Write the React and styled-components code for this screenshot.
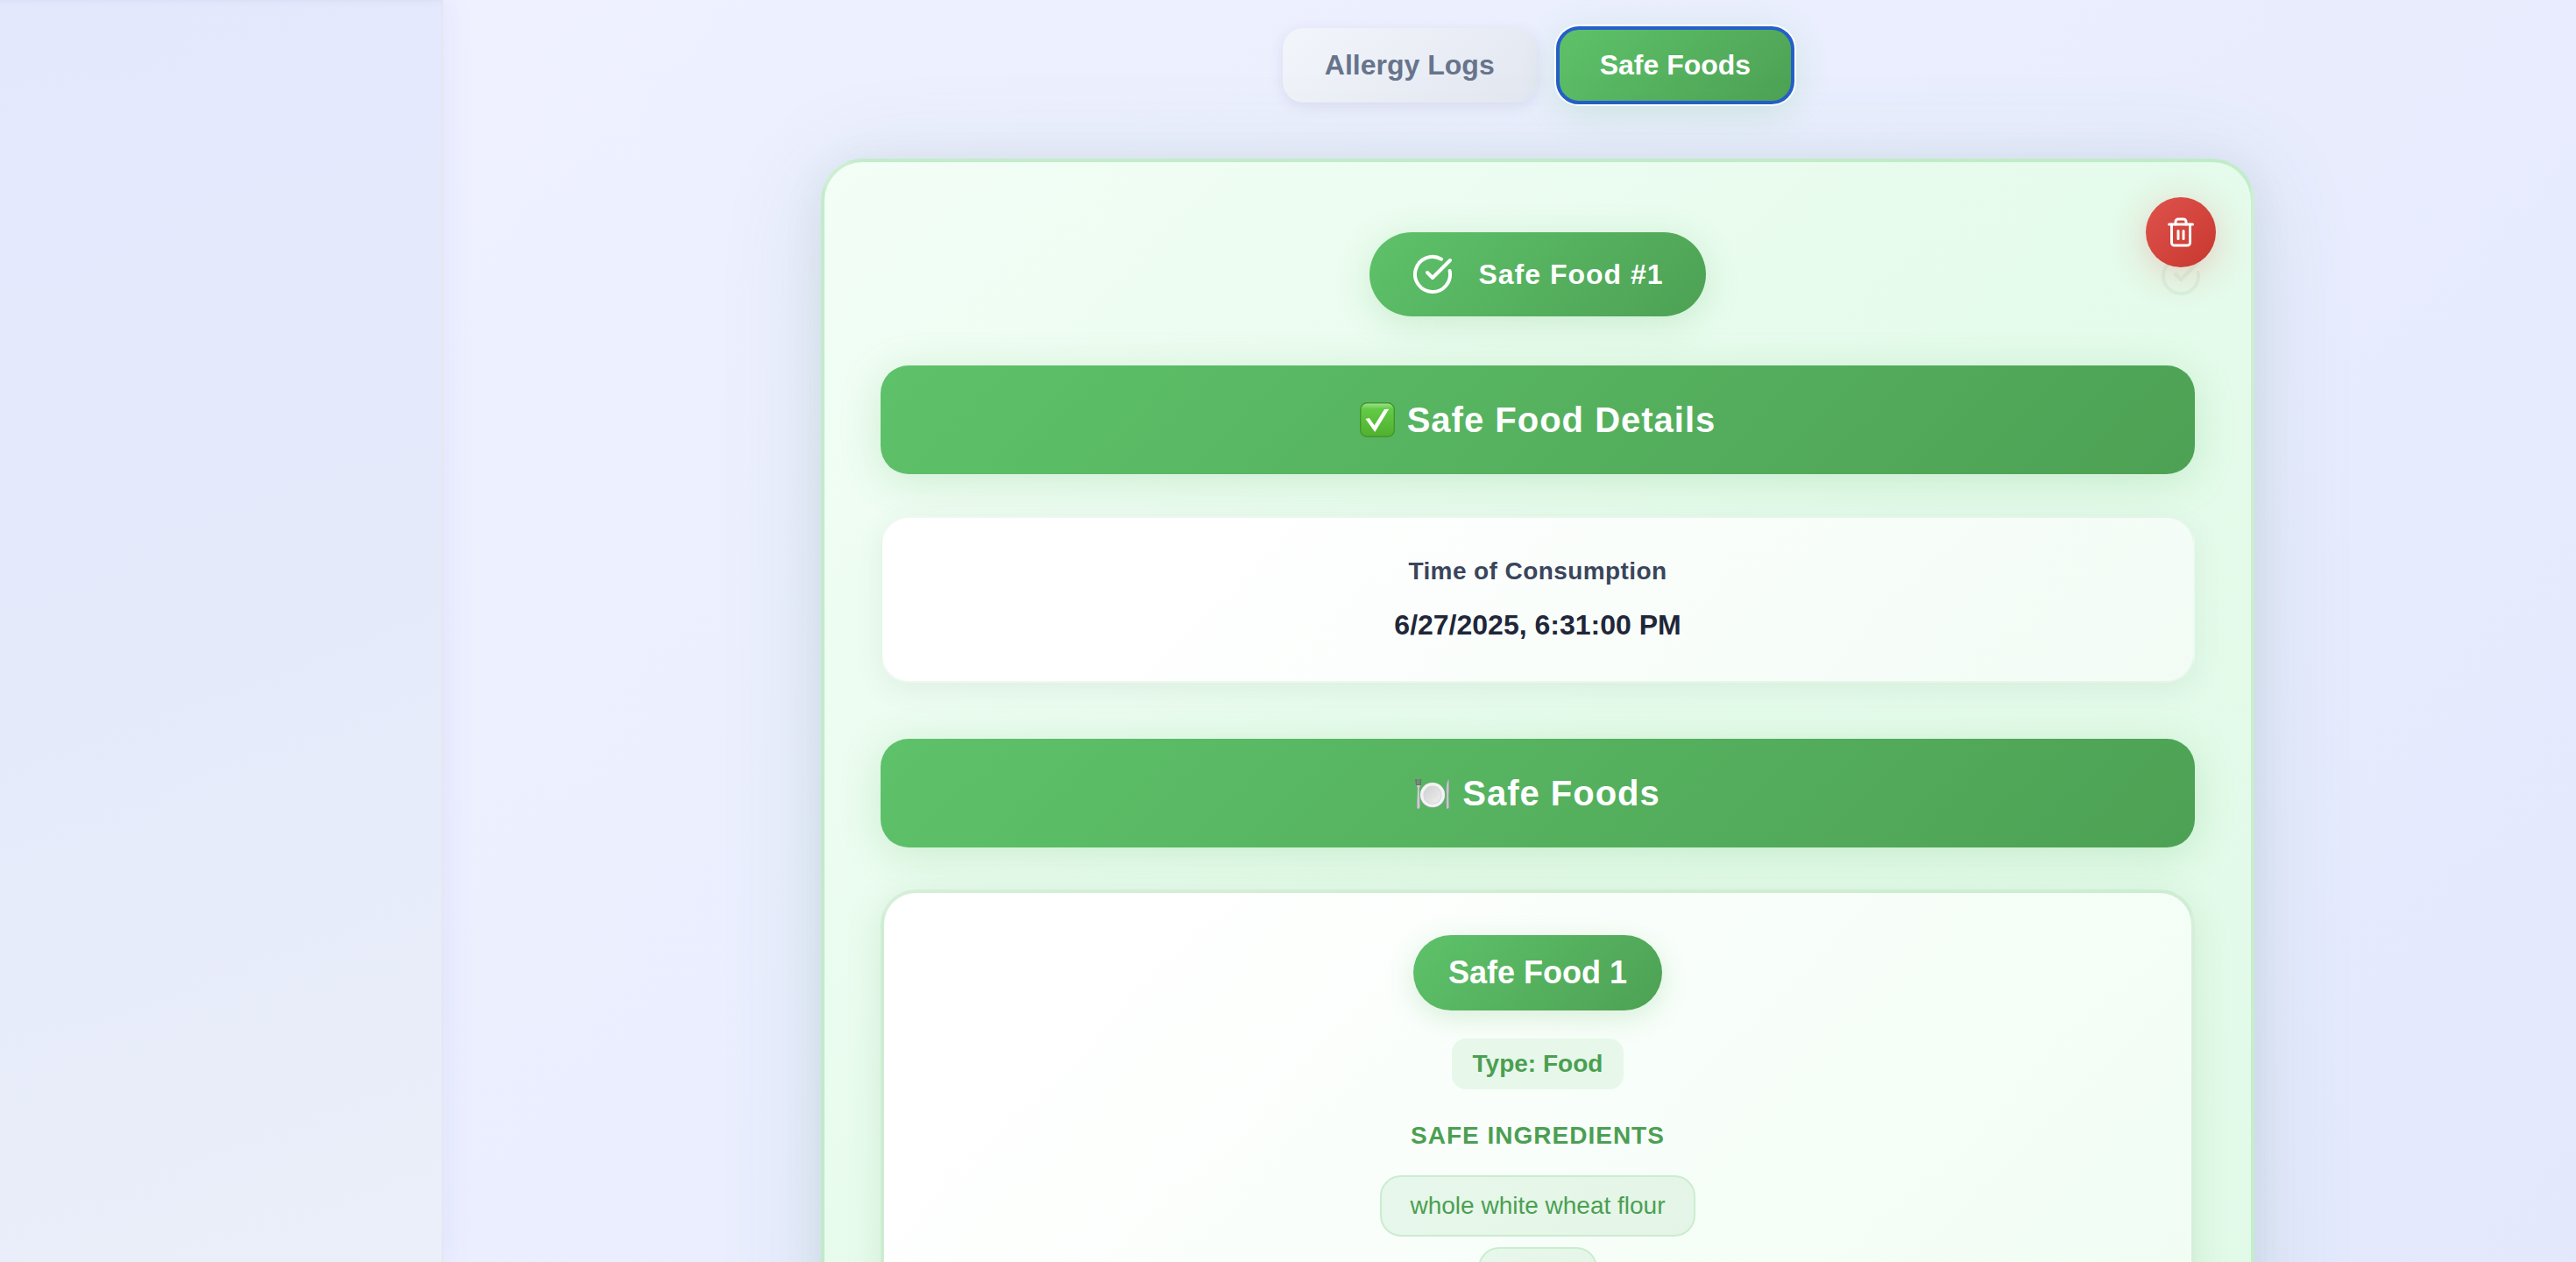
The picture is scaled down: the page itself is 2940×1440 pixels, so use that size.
import React, { useState } from 'react'
import styled, { createGlobalStyle } from 'styled-components'
import { CircleCheckBig, Trash2 } from 'lucide-react'

const GlobalStyle = createGlobalStyle`
    * {
        box-sizing: border-box;
    }

    body {
        margin: 0;
        font-family: "Liberation Sans", Arial, sans-serif;
        font-size: 28px;
        line-height: 1.5;
        color: #1f2739;
    }
`

const green = 'linear-gradient(135deg, #5ec26a 0%, #4da154 100%)'
const greenLine = 'rgba(86, 190, 100, 0.24)'

const Page = styled.div`
    display: flex;
    height: 100vh;
    overflow: hidden;
    background: linear-gradient(135deg, #f0f2ff 0%, #eaeefe 50%, #e3e8fd 100%);
`

const Sidebar = styled.aside`
    flex: 0 0 506px;
    background: linear-gradient(160deg, #e3e8fd 0%, #e5eafb 50%, #ebeff9 100%);
    border-right: 2px solid #e7e6ef;
    box-shadow: 4px 0 32px rgba(99, 102, 241, 0.08), inset 0 8px 8px -8px rgba(80, 80, 140, 0.08);
`

const Main = styled.main`
    flex: 1;
    display: flex;
    flex-direction: column;
    align-items: center;
    gap: 64px;
    padding: 32px 0 64px 64px;
`

const Tabs = styled.div`
    display: flex;
    gap: 24px;
`

const Tab = styled.button`
    border: none;
    border-radius: 24px;
    padding: 24px 48px;
    font: 700 32px/37px "Liberation Sans", Arial, sans-serif;
    cursor: pointer;
    color: ${props => (props.$active ? '#fff' : '#67748b')};
    background: ${props => (props.$active ? green : 'linear-gradient(135deg, #f2f5fa 0%, #e3e7f1 100%)')};
    outline: ${props => (props.$active ? '4px solid #255fc9' : 'none')};
    outline-offset: -2px;
    box-shadow: ${props => (props.$active
        ? '0 0 0 4px #fff, 0 8px 40px rgba(95, 197, 108, 0.24)'
        : '0 4px 16px rgba(60, 60, 110, 0.1)')};
`

const LogCard = styled.section`
    position: relative;
    display: flex;
    flex-direction: column;
    align-items: center;
    width: 100%;
    max-width: 1636px;
    padding: 80px 64px 64px;
    border: 4px solid ${greenLine};
    border-radius: 48px;
    background: linear-gradient(135deg, #f3fef6 0%, #e5fbeb 50%, #e1fae8 100%);
    box-shadow: 0 16px 120px rgba(70, 150, 110, 0.14), 0 8px 48px rgba(40, 70, 60, 0.08);
`

const DeleteButton = styled.button`
    position: absolute;
    z-index: 1;
    top: 40px;
    right: 40px;
    display: flex;
    align-items: center;
    justify-content: center;
    width: 80px;
    height: 80px;
    padding: 0;
    border: none;
    border-radius: 50%;
    color: #fff;
    background: linear-gradient(135deg, #df534c 0%, #c7372f 100%);
    box-shadow: 0 8px 40px rgba(220, 70, 60, 0.25);
    cursor: pointer;
`

const Watermark = styled.span`
    position: absolute;
    top: 106px;
    right: 56px;
    display: flex;
    color: #4b9f52;
    opacity: 0.08;
`

const LogBadge = styled.div`
    display: flex;
    align-items: center;
    gap: 28px;
    margin-bottom: 56px;
    padding: 24px 48px;
    border-radius: 48px;
    font-size: 32px;
    font-weight: 700;
    line-height: 48px;
    letter-spacing: 1px;
    color: #fff;
    background: ${green};
    box-shadow: 0 8px 40px rgba(76, 175, 80, 0.2);
`

const SectionTitle = styled.h2`
    display: flex;
    align-items: center;
    justify-content: center;
    gap: 14px;
    width: 100%;
    margin: 0 0 48px;
    padding: 32px;
    border-radius: 32px;
    font-size: 40px;
    font-weight: 700;
    line-height: 60px;
    letter-spacing: 1px;
    color: #fff;
    background: ${green};
    box-shadow: 0 8px 48px rgba(76, 175, 80, 0.2);
`

const InfoCard = styled.div`
    width: 100%;
    margin-bottom: 64px;
    padding: 40px;
    border: 2px solid rgba(86, 196, 100, 0.1);
    border-radius: 32px;
    text-align: center;
    background: linear-gradient(135deg, #fff 0%, #fff 20%, #f2fcf5 100%);
    box-shadow: 0 8px 32px rgba(60, 90, 80, 0.08);
`

const InfoLabel = styled.div`
    margin-bottom: 16px;
    font-weight: 700;
    letter-spacing: 0.015em;
    color: #3a455b;
`

const InfoValue = styled.div`
    font-size: 32px;
    font-weight: 700;
`

const FoodCard = styled.article`
    display: flex;
    flex-direction: column;
    align-items: center;
    width: 100%;
    padding: 48px;
    border: 4px solid ${greenLine};
    border-radius: 40px;
    background: linear-gradient(135deg, #fff 0%, #fff 12%, #f0fdf3 100%);
    box-shadow: 0 8px 40px rgba(76, 150, 80, 0.14);
`

const FoodName = styled.h3`
    margin: 0 0 32px;
    padding: 16px 40px;
    border-radius: 44px;
    font-size: 36px;
    font-weight: 700;
    line-height: 54px;
    color: #fff;
    background: ${green};
    box-shadow: 0 8px 32px rgba(76, 175, 80, 0.2);
`

const FoodType = styled.div`
    margin-bottom: 32px;
    padding: 8px 24px;
    border-radius: 16px;
    font-weight: 700;
    color: #4b9f52;
    background: #e7f7ea;
`

const IngredientsTitle = styled.h4`
    margin: 0 0 24px;
    font-size: 28px;
    font-weight: 700;
    letter-spacing: 1px;
    text-transform: uppercase;
    color: #4b9f52;
`

const Ingredients = styled.ul`
    display: flex;
    flex-direction: column;
    align-items: center;
    gap: 12px;
    margin: 0;
    padding: 0;
    list-style: none;
`

const Ingredient = styled.li`
    padding: 12px 32px;
    border: 2px solid #caedcf;
    border-radius: 24px;
    color: #4b9f52;
    background: linear-gradient(135deg, #e8f7eb 0%, #e4f5e7 100%);
`

const CheckEmoji = () => (
    <svg width="40" height="40" viewBox="0 0 40 40" aria-hidden="true">
        <defs>
            <linearGradient id="checkFace" x1="0" y1="0" x2="0" y2="1">
                <stop offset="0" stopColor="#a3e592" />
                <stop offset="0.18" stopColor="#62cb45" />
                <stop offset="1" stopColor="#50b02f" />
            </linearGradient>
        </defs>
        <rect x="0.7" y="0.7" width="38.6" height="38.6" rx="7.5" fill="url(#checkFace)" stroke="#42962c" strokeWidth="1.4" />
        <path d="M6.5 19 L10.8 18 L16.6 26.2 L28 8 L33.2 7.8 L17.2 34 Z" fill="#fff" />
    </svg>
)

const PlateEmoji = () => (
    <svg width="40" height="40" viewBox="0 0 40 40" aria-hidden="true">
        <defs>
            <linearGradient id="metal" x1="0" y1="0" x2="1" y2="0">
                <stop offset="0" stopColor="#6e7476" />
                <stop offset="0.5" stopColor="#d5d9dc" />
                <stop offset="1" stopColor="#858b8e" />
            </linearGradient>
            <linearGradient id="well" x1="0" y1="0" x2="1" y2="1">
                <stop offset="0" stopColor="#cfd0d2" />
                <stop offset="1" stopColor="#efefef" />
            </linearGradient>
        </defs>
        <circle cx="20" cy="22.4" r="14.4" fill="#9fa5a7" />
        <circle cx="20" cy="22" r="14" fill="#f3f3f4" />
        <circle cx="20" cy="22.2" r="10.6" fill="#d4d6d8" />
        <circle cx="20" cy="22.2" r="9.6" fill="url(#well)" />
        <path d="M0.4 4 L1.2 11.5 Q1.6 13.6 3 14 L1.5 36 Q1.4 37.8 3.6 37.8 Q6 37.8 5.9 36 L4.7 14 Q6.4 13.6 6.7 11.5 L7.2 4 Z" fill="url(#metal)" />
        <path d="M0.4 4 H7.2 L6.8 11 H1.1 Z" fill="#5e7564" />
        <path d="M2.4 4 V10 M3.8 4 V10 M5.2 4 V10" stroke="#98a39b" strokeWidth="0.6" />
        <path d="M39.4 3.3 Q35.5 7 35 19.5 L36 20.5 L34.6 36 Q34.6 37.8 36.8 37.8 Q39.2 37.8 39.1 36 L38.4 20.5 Q39.8 19 39.4 3.3 Z" fill="url(#metal)" />
    </svg>
)

const tabs = ['Allergy Logs', 'Safe Foods']

const ingredients = ['whole white wheat flour', 'water']

const App = () => {
    const [active, setActive] = useState('Safe Foods')

    return (
        <>
            <GlobalStyle />
            <Page>
                <Sidebar />
                <Main>
                    <Tabs>
                        {tabs.map(tab => (
                            <Tab key={tab} type="button" $active={tab === active} onClick={() => setActive(tab)}>
                                {tab}
                            </Tab>
                        ))}
                    </Tabs>
                    <LogCard>
                        <Watermark>
                            <CircleCheckBig size={48} />
                        </Watermark>
                        <DeleteButton type="button" aria-label="Delete">
                            <Trash2 size={36} />
                        </DeleteButton>
                        <LogBadge>
                            <CircleCheckBig size={48} />
                            <span>Safe Food #1</span>
                        </LogBadge>
                        <SectionTitle>
                            <CheckEmoji />
                            <span>Safe Food Details</span>
                        </SectionTitle>
                        <InfoCard>
                            <InfoLabel>Time of Consumption</InfoLabel>
                            <InfoValue>6/27/2025, 6:31:00 PM</InfoValue>
                        </InfoCard>
                        <SectionTitle>
                            <PlateEmoji />
                            <span>Safe Foods</span>
                        </SectionTitle>
                        <FoodCard>
                            <FoodName>Safe Food 1</FoodName>
                            <FoodType>Type: Food</FoodType>
                            <IngredientsTitle>Safe Ingredients</IngredientsTitle>
                            <Ingredients>
                                {ingredients.map(item => (
                                    <Ingredient key={item}>{item}</Ingredient>
                                ))}
                            </Ingredients>
                        </FoodCard>
                    </LogCard>
                </Main>
            </Page>
        </>
    )
}

export default App
